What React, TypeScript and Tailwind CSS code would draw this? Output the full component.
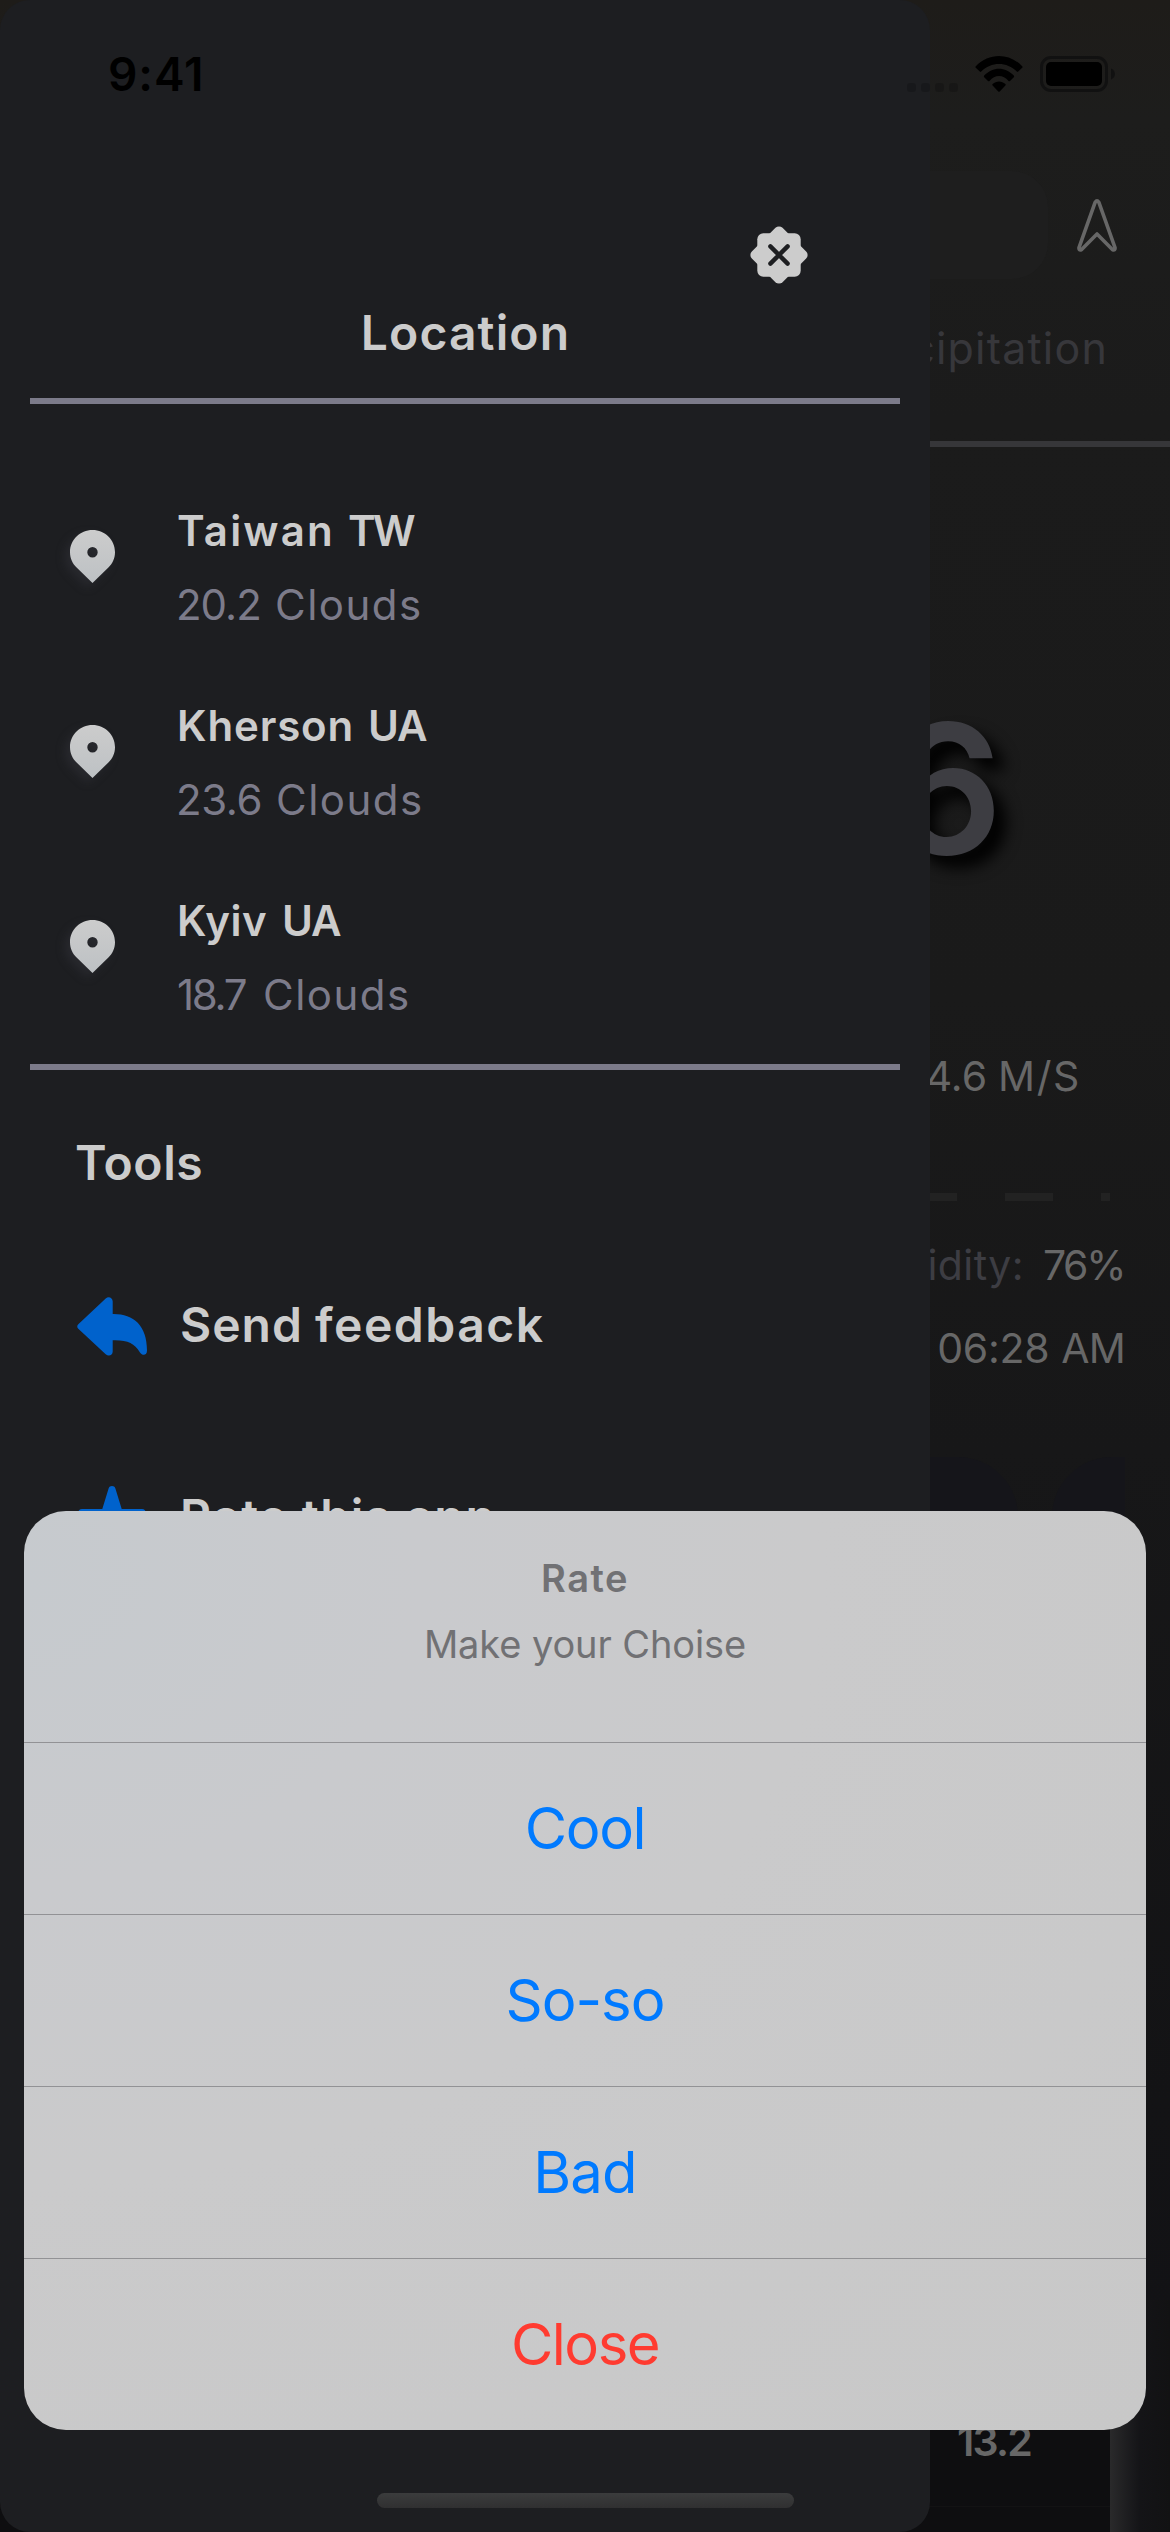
import React from "react";

type Word = { text: string; cls: string };
type Place = { name: Word[]; weather: Word[] };

const places: Place[] = [
  {
    name: [
      { text: "Taiwan", cls: "w-[171px] tracking-[2.2px]" },
      { text: "TW", cls: "tracking-[-3px]" },
    ],
    weather: [
      { text: "20.2", cls: "w-[99px] -ml-px tracking-[-1px]" },
      { text: "Clouds", cls: "tracking-[1.5px]" },
    ],
  },
  {
    name: [
      { text: "Kherson", cls: "w-[191px] tracking-[0.85px]" },
      { text: "UA", cls: "tracking-[-1px]" },
    ],
    weather: [
      { text: "23.6", cls: "w-[100px] -ml-px tracking-[-0.4px]" },
      { text: "Clouds", cls: "tracking-[1.5px]" },
    ],
  },
  {
    name: [
      { text: "Kyiv", cls: "w-[105px] tracking-[0.5px]" },
      { text: "UA", cls: "tracking-[-1px]" },
    ],
    weather: [
      { text: "18.7", cls: "w-[86px] tracking-[-2.3px]" },
      { text: "Clouds", cls: "tracking-[1.5px]" },
    ],
  },
];

const options = [
  { label: "Cool", cls: "text-[#007aff] tracking-[-1.4px]" },
  { label: "So-so", cls: "text-[#007aff] tracking-[-1.05px]" },
  { label: "Bad", cls: "text-[#007aff] tracking-[-0.8px]" },
  { label: "Close", cls: "text-[#ff3b30] tracking-[-1.5px]" },
];

function Words({ words }: { words: Word[] }) {
  return (
    <>
      {words.map((w) => (
        <span key={w.text} className={`shrink-0 whitespace-nowrap ${w.cls}`}>
          {w.text}
        </span>
      ))}
    </>
  );
}

function StatusIcons() {
  return (
    <div className="flex items-center">
      <svg width="51" height="9" className="mt-[27px]" fill="#000" fillOpacity="0.18">
        <rect x="0" width="9" height="9" rx="3" />
        <rect x="14" width="9" height="9" rx="3" />
        <rect x="28" width="9" height="9" rx="3" />
        <rect x="42" width="9" height="9" rx="3" />
      </svg>
      <svg width="48" height="36" viewBox="0 0 48 36" className="ml-[17px]">
        <path d="M0.8 10.2 C14 -3.4 34 -3.4 47.2 10.2 Q48 11 47.2 11.8 L43.2 15.6 Q42.5 16.3 41.8 15.6 C32 5.4 16 5.4 6.2 15.6 Q5.5 16.3 4.8 15.6 L0.8 11.8 Q0 11 0.8 10.2Z" />
        <path d="M9.2 19.6 C17.5 10.4 30.5 10.4 38.8 19.6 Q39.6 20.4 38.8 21.2 L35 25 Q34.2 25.7 33.5 24.9 C28.2 18.4 19.8 18.4 14.5 24.9 Q13.8 25.7 13 25 L9.2 21.2 Q8.4 20.4 9.2 19.6Z" />
        <path d="M17.6 28 C21.2 24.6 26.8 24.6 30.4 28 Q31.1 28.8 30.4 29.5 L24.7 35.4 Q24 36.1 23.3 35.4 L17.6 29.5 Q16.9 28.8 17.6 28Z" />
      </svg>
      <svg width="75" height="36" className="ml-[17px]">
        <rect x="1.5" y="1.5" width="65" height="33" rx="9.5" fill="none" stroke="#111111" strokeWidth="3" />
        <rect x="6" y="6" width="56" height="24" rx="5" />
        <path d="M71 12.5 C76.2 14.5 76.2 21.5 71 23.5Z" fill="#111111" />
      </svg>
    </div>
  );
}

function CloseBadge() {
  return (
    <svg width="58" height="58" viewBox="-29 -29 58 58">
      <rect x="-21.7" y="-21.7" width="43.4" height="43.4" rx="6" fill="#cccccc" />
      <rect x="-21.7" y="-21.7" width="43.4" height="43.4" rx="5" fill="#cccccc" transform="rotate(45)" />
      <path d="M-8.6 -8.6 L8.6 8.6 M8.6 -8.6 L-8.6 8.6" stroke="#1d1e21" strokeWidth="4.4" strokeLinecap="round" />
    </svg>
  );
}

function Pin() {
  return (
    <svg width="45" height="53" viewBox="0 0 45 53" className="mt-[29px] shrink-0 overflow-visible drop-shadow-[-5px_5px_5px_rgba(60,60,70,0.35)]">
      <defs>
        <linearGradient id="pin" x1="0" y1="0" x2="0" y2="1">
          <stop offset="0" stopColor="#cccccc" />
          <stop offset="1" stopColor="#bdc1c4" />
        </linearGradient>
      </defs>
      <path
        fill="url(#pin)"
        fillRule="evenodd"
        d="M22.5 0 C35 0 45 9.8 45 22 C45 28.6 42.4 33.6 38.4 37.6 L22.5 53 L6.6 37.6 C2.6 33.6 0 28.6 0 22 C0 9.8 10 0 22.5 0Z M22.5 17 A5.2 5.2 0 1 0 22.5 27.4 A5.2 5.2 0 1 0 22.5 17Z"
      />
    </svg>
  );
}

function ReplyIcon() {
  return (
    <svg width="70" height="60" viewBox="0 0 70 60" fill="#0062cc" className="shrink-0">
      <path d="M1.3 28.3 L28.7 2.4 C31.5 -0.2 35.7 1.6 35.7 5.4 V18 C56 17.6 70 29 70 54.5 C70 59.6 65.4 60 63 56.4 C57 46.8 50.6 43.8 35.7 44.2 V55.5 C35.7 59.3 31.5 60.8 28.7 58.2 L1.3 32.7 C-0.1 31.4 -0.1 29.6 1.3 28.3Z" />
    </svg>
  );
}

function StarIcon() {
  return (
    <svg width="70" height="70" viewBox="0 0 70 70" fill="#0062cc" className="mt-[-5px] shrink-0">
      <path d="M31.6 2.4 C32.6 -0.8 37.4 -0.8 38.4 2.4 L44.7 23 H65 C68.8 23 69.9 27.3 67 29.4 L50.5 41.8 L56.8 62 C57.8 65.4 54.6 67.6 51.9 65.6 L35 53 L18.1 65.6 C15.4 67.6 12.2 65.4 13.2 62 L19.5 41.8 L3 29.4 C0.1 27.3 1.2 23 5 23 H25.3Z" />
    </svg>
  );
}

function NavArrow() {
  return (
    <svg width="40" height="53" viewBox="0 0 40 53" fill="none" stroke="#676767" strokeWidth="3.6" strokeLinejoin="round">
      <path d="M18.2 3.2 Q20 0.6 21.8 3.2 L38 48.6 Q38.4 51.6 35.6 50.8 L20 35 L4.4 50.8 Q1.6 51.6 2 48.6Z" />
    </svg>
  );
}

function WeatherScreen() {
  return (
    <main className="flex h-full flex-col text-[41px] leading-[50px] text-[#676767]">
      <div className="mt-[171px] flex h-[108px] items-center justify-end gap-[29px] pr-[53px]">
        <div className="h-full w-[800px] rounded-[36px] bg-[#1e1e1e]" />
        <NavArrow />
      </div>
      <div className="mt-[39px] pr-[62px] text-right text-[43px] leading-[60px] tracking-[1.2px] text-[#37373b]">Precipitation</div>
      <div className="mt-[63px] h-[6px] bg-[#363639]" />
      <div className="mt-[252px] pr-[167px] text-right text-[180px] leading-[180px] font-semibold text-[#3d3d42] [text-shadow:12px_12px_15px_#000]">6</div>
      <div className="mt-[172px] flex justify-end gap-[11px] pr-[89px]">
        <span>4.6</span>
        <span className="tracking-[1.6px]">M/S</span>
      </div>
      <div className="mt-[92px] mr-[60px] flex h-[8px] justify-end gap-[48px]">
        <div className="w-[48px] bg-[#222222]" />
        <div className="w-[48px] bg-[#222222]" />
        <div className="w-[9px] bg-[#222222]" />
      </div>
      <div className="mt-[39px] flex justify-end gap-[19px] pr-[46px]">
        <span className="tracking-[0.4px] text-[#3d3d43]">Humidity:</span>
        <span className="tracking-[-2.4px]">76%</span>
      </div>
      <div className="mt-[33px] flex justify-end gap-[12px] pr-[45px]">
        <span className="tracking-[-0.3px]">06:28</span>
        <span className="tracking-[-0.8px]">AM</span>
      </div>
      <div className="mt-[84px] mr-[45px] flex h-[300px] justify-end gap-[34px]">
        <div className="w-[160px] rounded-[60px] bg-[#15151a]" />
        <div className="w-[73px] rounded-l-[60px] bg-[#15151a]" />
      </div>
      <div className="mt-auto flex h-[232px] justify-end">
        <div className="flex flex-1 flex-col bg-[#0e0e10] pr-[79px]">
          <div className="mt-[116px] text-right font-semibold tracking-[-1.8px]">13.2</div>
          <div className="mt-[40px] mr-[-79px] h-px bg-[#131314]" />
        </div>
        <div className="w-[60px] bg-linear-to-r from-[#2a2a2b] via-[#141417] to-[#121213]" />
      </div>
    </main>
  );
}

function Drawer() {
  return (
    <aside className="absolute top-0 left-0 flex h-full w-[930px] flex-col rounded-[30px] bg-[#1d1e21] text-[48px] leading-[56px] font-semibold text-[#cccccc]">
      <div className="mt-[226px] flex justify-end pr-[122px]">
        <CloseBadge />
      </div>
      <h1 className="mt-[21px] pl-px text-center tracking-[1.1px]">Location</h1>
      <div className="mx-[30px] mt-[37px] h-[6px] bg-[#7c7b8a]" />
      <ul className="mt-[97px] flex flex-col gap-[61px] pl-[70px] text-[42px] leading-[60px]">
        {places.map((p) => (
          <li key={p.name[0].text} className="flex h-[134px] items-start gap-[62px]">
            <Pin />
            <div>
              <div className="flex">
                <Words words={p.name} />
              </div>
              <div className="mt-[14px] flex font-normal text-[#7c7b8a]">
                <Words words={p.weather} />
              </div>
            </div>
          </li>
        ))}
      </ul>
      <div className="mx-[30px] mt-[39px] h-[6px] bg-[#7c7b8a]" />
      <h2 className="mt-[65px] pl-[75px] tracking-[0.6px]">Tools</h2>
      <div className="mt-[105px] flex h-[60px] items-center pl-[77px]">
        <ReplyIcon />
        <div className="-mt-[2px] ml-[33px] flex">
          <span className="w-[135px] tracking-[1px]">Send</span>
          <span className="tracking-[1.5px]">feedback</span>
        </div>
      </div>
      <div className="mt-[135px] flex h-[60px] items-start pl-[77px]">
        <StarIcon />
        <span className="-mt-[2px] ml-[33px] tracking-[1.25px]">Rate this app</span>
      </div>
    </aside>
  );
}

function RateSheet() {
  return (
    <section className="absolute top-[1511px] left-[24px] flex w-[1122px] flex-col overflow-hidden rounded-[42px] bg-[radial-gradient(ellipse_at_0%_8%,#c6cace_0%,#c9cacd_25%,#cacacb_50%,#c8c8c8_100%)] text-center">
      <header className="flex h-[231px] flex-col gap-[16px] pt-[42px] text-[38px] leading-[50px] text-[#717174]">
        <h3 className="font-semibold tracking-[1.5px]">Rate</h3>
        <p className="tracking-[-0.1px]">Make your Choise</p>
      </header>
      {options.map((o) => (
        <button key={o.label} className={`h-[172px] border-t border-[#929295] text-[58px] leading-[171px] ${o.cls}`}>
          {o.label}
        </button>
      ))}
    </section>
  );
}

export default function App() {
  return (
    <div className="relative h-[2532px] w-[1170px] overflow-hidden bg-[linear-gradient(180deg,#1e1c19_0px,#1d1d1c_120px,#1b1b1b_420px,#1a1a1a_1000px,#171718_1450px,#131315_2100px,#111115_2532px)] font-['Inter',sans-serif]">
      <WeatherScreen />
      <Drawer />
      <div className="absolute top-0 left-0 flex h-[148px] w-full items-center justify-between pr-[55px] pl-[108px]">
        <span className="text-[46px] font-semibold tracking-[0.9px] text-black">9:41</span>
        <StatusIcons />
      </div>
      <RateSheet />
      <div className="absolute bottom-[24px] left-[377px] h-[15px] w-[417px] rounded-full bg-linear-to-b from-[#3b3c3d] to-[#303031]" />
    </div>
  );
}
